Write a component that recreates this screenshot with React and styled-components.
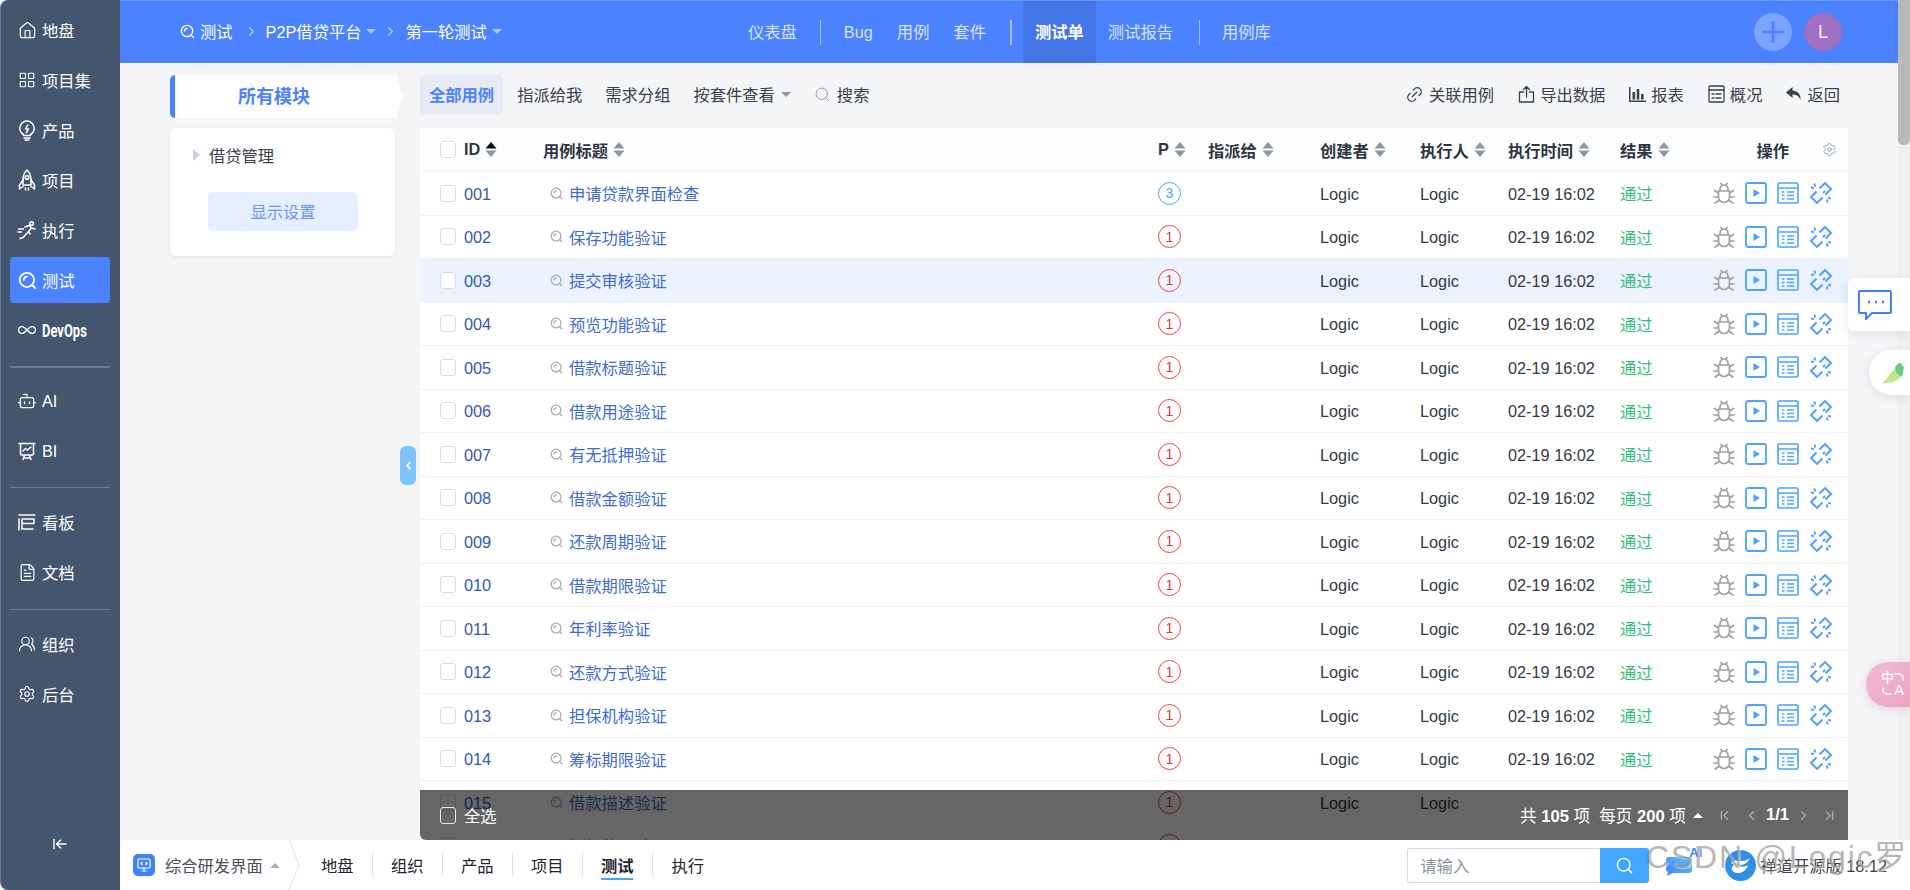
import React from 'react';
import styled, { createGlobalStyle } from 'styled-components';
import { House, LayoutGrid, Infinity as InfinityIcon, Bot, FileText, UsersRound, Settings, ArrowLeftToLine, Link2, Search, ChevronLeft, ChevronRight, ChevronFirst, ChevronLast } from 'lucide-react';

const Global = createGlobalStyle`
  html, body { margin: 0; padding: 0; height: 100%; overflow: hidden; background: #fff; }
  body { font-family: "Liberation Sans", "Noto Sans CJK SC", sans-serif; font-size: 16.3px; color: #333a47; }
  * { box-sizing: border-box; }
`;

const Shell = styled.div`position: relative; display: flex; width: 1910px; height: 890px; overflow: hidden; background: #fff;`;
const Side = styled.aside`
  flex: 0 0 120px; display: flex; flex-direction: column; padding: 7px 10px 0 9px; background: #44566e;
  border-left: 1px solid #6b7a8e; border-radius: 8px 0 0 8px; color: #fff;
`;
const SideGroup = styled.div`display: flex; flex-direction: column; gap: 4px;`;
const SideItem = styled.div`
  display: flex; align-items: center; gap: 5px; height: 46px; padding-left: 7px; border-radius: 3px;
  background: ${p => (p.$active ? '#4a82ff' : 'transparent')};
`;
const SideIcon = styled.span`display: flex; justify-content: center; width: 20px; flex: none;`;
const DevOpsLabel = styled.span`display: inline-block; font: 700 18px "Roboto", sans-serif; transform: scaleX(.72); transform-origin: left center;`;
const SideDivider = styled.div`height: ${p => p.$h || 1}px; background: #6d7c90; margin: ${p => p.$t}px 0 ${p => p.$b}px;`;
const Collapse = styled.div`margin-top: auto; height: 54px; display: flex; justify-content: center; align-items: flex-start;`;

const Main = styled.div`flex: 1; min-width: 0; display: flex; flex-direction: column;`;
const Upper = styled.div`flex: 1; min-height: 0; display: flex;`;
const PageCol = styled.div`flex: 1; min-width: 0; display: flex; flex-direction: column; background: #f4f5f7;`;
const ScrollTrack = styled.div`flex: 0 0 12px; background: #f0f0f1;`;
const ScrollThumb = styled.div`height: 145px; background: #b9b9b9; border-radius: 0 0 5px 5px;`;

const Header = styled.header`flex: 0 0 63px; display: flex; align-items: stretch; background: #4a82ff; border-top: 1px solid #6b98ff; padding: 0 56px 0 60px; color: #fff;`;
const Crumbs = styled.div`flex: 0 0 568px; display: flex; align-items: center; padding-bottom: 2px;`;
const Crumb = styled.span`display: flex; align-items: center; gap: 5px; white-space: nowrap;`;
const CrumbSep = styled.span`display: flex; margin: 0 7px 0 ${p => p.$l}px; color: rgba(255,255,255,.6);`;
const Caret = styled.span`
  display: inline-block; width: 0; height: 0; border-left: 5px solid transparent; border-right: 5px solid transparent;
  border-top: 5px solid ${p => p.$color || 'rgba(255,255,255,.55)'};
`;
const CaretUp = styled(Caret)`border-top: 0; border-bottom: 5px solid ${p => p.$color || '#fff'};`;
const Nav = styled.nav`display: flex; align-items: stretch; margin-left: -12px; flex: 1;`;
const NavLink = styled.a`
  display: flex; align-items: center; padding: 0 12px ${p => (p.$latin ? 0 : 2)}px; white-space: nowrap;
  color: ${p => (p.$active ? '#fff' : 'rgba(255,255,255,.8)')}; font-weight: ${p => (p.$active ? 700 : 400)};
  background: ${p => (p.$active ? '#4475e6' : 'transparent')};
`;
const NavSep = styled.span`align-self: center; width: ${p => p.$w || 1}px; height: 25px; background: rgba(255,255,255,.5); margin: 0 ${p => p.$r || 11}px 0 ${p => p.$l || 11}px;`;
const HeadRight = styled.div`display: flex; align-items: center; gap: 12px;`;
const AddBtn = styled.div`width: 38px; height: 38px; border-radius: 50%; background: #79a4ff; display: flex; align-items: center; justify-content: center; color: #4a82ff;`;
const Avatar = styled.div`width: 38px; height: 38px; border-radius: 50%; background: #a06fc2; display: flex; align-items: center; justify-content: center; color: #f3e9f8; font-size: 18px;`;

const Content = styled.div`flex: 1; min-height: 0; display: flex; gap: 25px; padding: 12px 50px 0;`;
const ModuleCol = styled.div`flex: 0 0 225px; min-width: 0; width: 225px; display: flex; flex-direction: column; gap: 10px; position: relative;`;
const ModuleHead = styled.div`
  flex: none; height: 43px; width: 233px; background: #fff; border-left: 5px solid #4a82ff; border-radius: 5px 0 0 5px;
  display: flex; align-items: center; justify-content: center; padding: 0 30px 3px 0; font-size: 18px; font-weight: 700; color: #4a82ff;
  clip-path: polygon(0 0, 97% 0, 100% 50%, 97% 100%, 0 100%);
`;
const ModuleCard = styled.div`height: 128px; background: #fff; border-radius: 6px; box-shadow: 0 1px 4px rgba(30,50,90,.08); padding: 15px 0 0 23px;`;
const ModuleRow = styled.div`display: flex; align-items: center; gap: 9px; height: 24px; color: #3a404c;`;
const TriRight = styled.span`width: 0; height: 0; border-top: 6px solid transparent; border-bottom: 6px solid transparent; border-left: 7px solid #c8cfdc;`;
const SettingBtn = styled.div`width: 150px; height: 39px; margin: 25px 0 0 15px; padding-bottom: 2px; background: #e6efff; border-radius: 6px; display: flex; align-items: center; justify-content: center; color: #6a94f5;`;
const Handle = styled.div`position: absolute; left: 230px; top: 371px; width: 16px; height: 39px; border-radius: 6px; background: #7cc4fb; color: #fff; display: flex; align-items: center; justify-content: center;`;

const TablePane = styled.div`flex: 0 0 1428px; min-width: 0; display: flex; flex-direction: column; position: relative; overflow: hidden;`;
const Toolbar = styled.div`flex: 0 0 40px; margin-bottom: 13px; display: flex; align-items: center; gap: 5px;`;
const ToolTab = styled.div`
  height: 40px; padding: 0 9px 2px; display: flex; align-items: center; gap: 6px; border-radius: 5px; white-space: nowrap; color: ${p => (p.$active ? '#4a82ff' : '#3a404c')};
  background: ${p => (p.$active ? '#e8ebf4' : 'transparent')}; font-weight: ${p => (p.$active ? 700 : 400)};
`;
const Tools = styled.div`margin-left: auto; display: flex; align-items: center; gap: 24px; padding: 0 8px 2px 0;`;
const Tool = styled.div`display: flex; align-items: center; gap: 5px; color: #3a404c; white-space: nowrap;`;

const columns = '24px 79px 615px 50px 112px 100px 88px 112px 90px 1fr';
const Table = styled.div`flex: 1; min-height: 0; background: #fff; overflow: hidden;`;
const HeadRow = styled.div`
  display: grid; grid-template-columns: ${columns}; align-items: center; height: 44px; padding-left: 20px; background: #fcfdfe;
  border-bottom: 1px solid #eff1f4; font-weight: 700; color: #2f3542;
`;
const Row = styled.div`
  display: grid; grid-template-columns: ${columns}; align-items: center; height: 43.5px; padding-left: 20px;
  border-bottom: 1px solid #f1f2f4; background: ${p => (p.$hover ? '#ecf2fe' : '#fff')};
`;
const Check = styled.span`display: block; width: 16px; height: 17px; border: 1px solid ${p => (p.$light ? '#e8e8e8' : '#d9dce1')}; border-radius: 3px; background: ${p => (p.$light ? 'transparent' : '#fff')};`;
const HeadCell = styled.div`display: flex; align-items: center; gap: 5px; white-space: nowrap;`;
const ActionHead = styled.div`display: flex; align-items: center; justify-content: flex-end; padding-right: 11px; gap: 33px; color: #2f3542;`;
const LatinCell = styled.span`padding-top: 2px;`;
const IdCell = styled.a`padding-top: 2px; color: #3358b5;`;
const TitleCell = styled.a`display: flex; align-items: center; gap: 6px; padding-left: 7px; color: #3f6bcf; white-space: nowrap;`;
const Badge = styled.span`
  display: flex; align-items: center; justify-content: center; width: 23px; height: 23px; border-radius: 50%; font-size: 14px;
  border: 1px solid ${p => (p.$blue ? '#4aa3ff' : '#f04040')}; color: ${p => (p.$blue ? '#4aa3ff' : '#d83a3a')};
`;
const Pass = styled.span`color: #35bd7f;`;
const Actions = styled.div`display: flex; align-items: center; gap: 10px; padding-left: 3px;`;

const Footer = styled.div`position: absolute; left: 0; right: 0; bottom: 0; height: 50px; background: rgba(0,0,0,.6); border-radius: 0 0 0 6px; display: flex; align-items: center; color: #fff;`;
const FootLeft = styled.div`display: flex; align-items: center; gap: 8px; padding-left: 20px;`;
const Pager = styled.div`margin-left: auto; height: 100%; width: 348px; background: #666; display: flex; align-items: center; justify-content: flex-end; padding-right: 11px; color: #fff; font-size: 16.6px;`;
const PagerText = styled.span`white-space: nowrap; margin-right: ${p => p.$mr || 0}px; color: #fff; strong { font-weight: 700; }`;
const PagerPage = styled.strong`margin: 0 7px 0 7px; white-space: nowrap;`;
const PagerIcon = styled.span`display: flex; color: #a8a8a8; margin-left: ${p => p.$ml || 0}px;`;

const Taskbar = styled.footer`flex: 0 0 50px; display: flex; align-items: center; padding-left: 13px; background: #fff; border-radius: 0 0 8px 0;`;
const AppLogo = styled.span`width: 22px; height: 22px; border-radius: 5px; background: #3f82ff; display: flex; align-items: center; justify-content: center; margin-right: 10px;`;
const AppName = styled.span`color: #4a505c; margin-right: 7px; white-space: nowrap;`;
const Chevron = styled.svg`display: block; margin-left: 8px; margin-right: 3px; flex: none;`;
const TaskTabs = styled.div`display: flex; align-items: center;`;
const TaskTab = styled.div`
  width: 70px; height: 24px; display: flex; align-items: center; justify-content: center; color: #1f2530; font-weight: ${p => (p.$active ? 700 : 400)};
  border-right: ${p => (p.$last ? 0 : '1px solid #dcdfe4')};
  span { position: relative; }
  span::after { content: ${p => (p.$active ? '""' : 'none')}; position: absolute; left: 0; right: 0; bottom: -3px; height: 2px; background: #42a5ff; }
`;
const TaskRight = styled.div`margin-left: auto; display: flex; align-items: center; padding-right: 23px;`;
const SearchBox = styled.div`display: flex; width: 242px; height: 35px; margin-right: 16px;`;
const SearchInput = styled.div`flex: 1; border: 1px solid #d6d9de; border-right: 0; border-radius: 3px 0 0 3px; color: #8a90a0; display: flex; align-items: center; padding-left: 12px;`;
const SearchBtn = styled.div`flex: 0 0 49px; background: #42a5ff; border-radius: 0 3px 3px 0; color: #fff; display: flex; align-items: center; justify-content: center;`;
const AiMark = styled.span`position: relative; display: flex; width: 60px;`;
const AiLabel = styled.span`position: absolute; left: 24px; top: -9px; font-size: 13px; font-weight: 700; color: #3f82ff;`;
const Edition = styled.span`display: flex; align-items: center; gap: 4px; color: #3a404c; white-space: nowrap;`;

const Watermark = styled.div`position: absolute; z-index: 5; left: 1646px; top: 839px; font-size: 32px; line-height: 37px; letter-spacing: 1.8px; color: rgba(135,135,135,.62); text-shadow: 1px 1px 0 rgba(255,255,255,.5); white-space: nowrap; pointer-events: none;`;
const FloatChat = styled.div`position: absolute; right: 0; top: 278px; width: 62px; height: 53px; background: #fff; border-radius: 6px 0 0 6px; box-shadow: 0 2px 12px rgba(40,60,100,.12); display: flex; align-items: center; padding-left: 9px;`;
const FloatBird = styled.div`position: absolute; right: 0; top: 350px; width: 41px; height: 45px; background: #fff; border-radius: 22px 0 0 22px; box-shadow: 0 2px 10px rgba(40,60,100,.12); display: flex; align-items: center; padding-left: 12px;`;
const FloatTrans = styled.div`position: absolute; right: 0; top: 662px; width: 44px; height: 45px; background: linear-gradient(135deg, #f5bdd4, #e8a3c1); border-radius: 22px 0 0 22px; box-shadow: 0 2px 10px rgba(200,100,150,.25); padding: 10px 0 0 15px;`;
const TransGrid = styled.div`display: grid; grid-template-columns: 12px 12px; grid-template-rows: 12px 12px; color: #fff; line-height: 12px; text-align: center;`;
const TransHan = styled.span`font-size: 13px; font-weight: 500;`;
const TransLatin = styled.span`font-size: 15px; font-weight: 400;`;

const base = { fill: 'none', stroke: 'currentColor', strokeWidth: 1.5, strokeLinecap: 'round', strokeLinejoin: 'round' };
const TestIcon = ({ size = 16, color }) => (
  <svg width={size} height={size} viewBox="0 0 16 16" {...base} style={{ color }}>
    <circle cx="7.5" cy="7.5" r="6" />
    <path d="M12 12l2.5 2.5M4.8 7.5a2.7 2.7 0 0 1 2.7-2.7" />
  </svg>
);
const BulbIcon = () => (
  <svg width="20" height="22" viewBox="0 0 20 22" {...base}>
    <path d="M6.5 15.5C4 14 2.8 11.8 2.8 9.3a7.2 7.2 0 0 1 14.4 0c0 2.5-1.2 4.7-3.7 6.2v1h-7z" />
    <path d="M7 19h6M8 21h4M10.8 6L8.5 10h3l-2.2 3.6" />
  </svg>
);
const RocketIcon = () => (
  <svg width="20" height="22" viewBox="0 0 20 22" {...base}>
    <path d="M10 1C7 4 6 7 6 11v5h8v-5c0-4-1-7-4-10z" />
    <circle cx="10" cy="8.5" r="1.8" />
    <path d="M6 11l-3.5 5v4L6 17.5M14 11l3.5 5v4L14 17.5M8.5 19v2M11.5 19v2" />
  </svg>
);
const RunIcon = () => (
  <svg width="20" height="20" viewBox="0 0 20 20" {...base}>
    <circle cx="14.5" cy="3.5" r="1.8" />
    <path d="M8 7l4-1.5 2.5 2.5-3 3.5 1.5 2.5M11.5 11.5L6 17.5 3 18.5M14.5 8l3.5 1M1.5 9h5M1 12h3.5" />
  </svg>
);
const BoardIcon = () => (
  <svg width="20" height="20" viewBox="0 0 20 20" {...base}>
    <path d="M2 3h16M5 7h12v4.5H5zM2 7v11M5 11.5V17h11" />
  </svg>
);
const ChartBoardIcon = () => (
  <svg width="20" height="20" viewBox="0 0 20 20" {...base}>
    <path d="M2 2.5h16M3.5 2.5V13a1 1 0 0 0 1 1h11a1 1 0 0 0 1-1V2.5M6 10l2.5-2.5 2 1.5L14 6M7.5 14.5l-1.5 4M12.5 14.5l1.5 4M6.5 17h7" />
  </svg>
);
const BugIcon = () => (
  <svg width="22" height="24" viewBox="0 0 22 24" {...base} stroke="#a0a0a0" strokeWidth="1.7">
    <path d="M5.5 10h11v6a5.5 5.5 0 0 1-11 0z M7 10V8a4 4 0 0 1 8 0v2 M8 2.5l1.5 2 M14 2.5l-1.5 2 M5.5 12L1.5 9.5 M16.5 12l4-2.5 M5.5 16H1 M16.5 16H21 M6 19.5l-4 2.5 M16 19.5l4 2.5" />
  </svg>
);
const PlayIcon = () => (
  <svg width="22" height="24" viewBox="0 0 22 24">
    <rect x="1" y="2" width="20" height="20" rx="2" fill="none" stroke="#4aa3ff" strokeWidth="1.8" />
    <path d="M8.5 8v8l6.5-4z" fill="#4aa3ff" />
  </svg>
);
const ListIcon = () => (
  <svg width="22" height="24" viewBox="0 0 22 24" {...base} stroke="#4aa3ff" strokeLinecap="butt" strokeWidth="1.6">
    <rect x="1" y="2" width="20" height="20" rx="1" />
    <path d="M1 7h20M5 11h2.5M10 11h7M5 14.5h2.5M10 14.5h7M5 18h2.5M10 18h7" />
  </svg>
);
const UnlinkIcon = () => (
  <svg width="24" height="24" viewBox="0 0 24 24" {...base} stroke="#4a9cff" strokeWidth="1.9" strokeLinecap="butt" strokeLinejoin="miter">
    <path d="M10.5 7.5L16 2l6 6-5.5 5.5M13.5 16.5L8 22l-6-6 5.5-5.5" />
    <path d="M5.5 2.5l.6 3M2 6.5l3 .6M16 10l-2 2M18.5 21.5l-.6-3M22 17.5l-3-.6" />
  </svg>
);
const SortIcon = ({ active }) => (
  <svg width="12" height="15" viewBox="0 0 12 15">
    <path d="M6 0l5.5 6.5H.5z" fill={active ? '#0c0c10' : '#8f95a3'} />
    <path d="M6 15L.5 8.5h11z" fill="#8f95a3" />
  </svg>
);
const ShareIcon = () => (
  <svg width="17" height="18" viewBox="0 0 17 18" {...base} strokeWidth="1.3">
    <path d="M5.5 7H1.5v10h14V7h-4M8.5 12V1.5M5.5 4.5l3-3 3 3" />
  </svg>
);
const BarsIcon = () => (
  <svg width="17" height="16" viewBox="0 0 17 16" fill="currentColor">
    <path d="M0 1h1.5v13.5H17V16H0zM3.5 6h2.6v7.5H3.5zM7.7 3h2.6v10.5H7.7zM12 8h2.6v5.5H12z" />
  </svg>
);
const SheetIcon = () => (
  <svg width="17" height="18" viewBox="0 0 17 18" {...base} strokeWidth="1.3">
    <rect x="1" y="1" width="15" height="16" rx="1" />
    <path d="M1 5h15M4 9h2M8 9h5M4 13h2M8 13h5" />
  </svg>
);
const BackIcon = () => (
  <svg width="16" height="14" viewBox="0 0 16 14" fill="currentColor">
    <path d="M6.5 0L0 5.5 6.5 11V7.5c4 0 6.5 1.5 8 5.5.5-5.5-2.5-9-8-9.5z" />
  </svg>
);
const MonitorIcon = () => (
  <svg width="14" height="14" viewBox="0 0 14 14" fill="none" stroke="#fff" strokeWidth="1.2">
    <rect x="1" y="1" width="12" height="9" rx="1" />
    <path d="M7 10v3M4.5 13h5M5.5 4L4 5.5 5.5 7M8.5 4L10 5.5 8.5 7" />
  </svg>
);
const ChatSmall = () => (
  <svg width="30" height="22" viewBox="0 0 30 22">
    <defs><linearGradient id="cg" x1="0" y1="1" x2="1" y2="0"><stop offset="0" stopColor="#3f82ff" /><stop offset="1" stopColor="#62c1f5" /></linearGradient></defs>
    <path d="M4 3h20a3 3 0 0 1 3 3v10a3 3 0 0 1-3 3H8l-6 3 1-4a3 3 0 0 1-2-3V6a3 3 0 0 1 3-3z" fill="url(#cg)" />
  </svg>
);
const ZenLogo = () => (
  <svg width="31" height="31" viewBox="0 0 31 31">
    <circle cx="15.5" cy="15.5" r="15.5" fill="#2f8fe8" />
    <path d="M6 13c5-6 9 2 19-5-3 7-9 8-13 6 3 4 8 3 11 1-2 8-12 11-16 5-1-2 0-4 2-5-2-2-3-2-3-2z" fill="#fff" />
  </svg>
);
const TransArc = ({ flip }) => (
  <svg width="12" height="12" viewBox="0 0 12 12" fill="none" stroke="#fff" strokeWidth="1.5" strokeLinecap="round" style={{ transform: flip ? 'rotate(180deg)' : 'none' }}>
    <path d="M2 2h4a4 4 0 0 1 4 4v2" />
  </svg>
);

const rows = [
  ['001', '申请贷款界面检查', 3], ['002', '保存功能验证', 1], ['003', '提交审核验证', 1], ['004', '预览功能验证', 1],
  ['005', '借款标题验证', 1], ['006', '借款用途验证', 1], ['007', '有无抵押验证', 1], ['008', '借款金额验证', 1],
  ['009', '还款周期验证', 1], ['010', '借款期限验证', 1], ['011', '年利率验证', 1], ['012', '还款方式验证', 1],
  ['013', '担保机构验证', 1], ['014', '筹标期限验证', 1], ['015', '借款描述验证', 1], ['016', '投标奖励验证', 1],
];

const sideA = [
  [<House size={19} strokeWidth={1.5} />, '地盘'], [<LayoutGrid size={18} strokeWidth={1.5} />, '项目集'], [<BulbIcon />, '产品'],
  [<RocketIcon />, '项目'], [<RunIcon />, '执行'], [<TestIcon size={19} />, '测试', true],
];
const heads = [['ID', true], ['用例标题'], ['P'], ['指派给'], ['创建者'], ['执行人'], ['执行时间'], ['结果']];

const SideEntry = ({ icon, label, active }) => (
  <SideItem $active={active}><SideIcon>{icon}</SideIcon><span>{label}</span></SideItem>
);

export default function App() {
  return (
    <Shell>
      <Global />
      <Side>
        <SideGroup>
          {sideA.map(([i, l, a]) => <SideEntry key={l} icon={i} label={l} active={a} />)}
          <SideEntry icon={<InfinityIcon size={20} strokeWidth={1.5} />} label={<DevOpsLabel>DevOps</DevOpsLabel>} />
        </SideGroup>
        <SideDivider $h={2} $t={13} $b={10} />
        <SideGroup>
          <SideEntry icon={<Bot size={20} strokeWidth={1.5} />} label="AI" />
          <SideEntry icon={<ChartBoardIcon />} label="BI" />
        </SideGroup>
        <SideDivider $t={13} $b={11} />
        <SideGroup>
          <SideEntry icon={<BoardIcon />} label="看板" />
          <SideEntry icon={<FileText size={19} strokeWidth={1.5} />} label="文档" />
        </SideGroup>
        <SideDivider $t={14} $b={11} />
        <SideGroup>
          <SideEntry icon={<UsersRound size={18} strokeWidth={1.5} />} label="组织" />
          <SideEntry icon={<Settings size={18} strokeWidth={1.5} />} label="后台" />
        </SideGroup>
        <Collapse><ArrowLeftToLine size={16} strokeWidth={2} /></Collapse>
      </Side>

      <Main>
        <Upper>
          <PageCol>
            <Header>
              <Crumbs>
                <Crumb><TestIcon size={15} />测试</Crumb>
                <CrumbSep $l={11}><ChevronRight size={15} strokeWidth={2} /></CrumbSep>
                <Crumb>P2P借贷平台<Caret /></Crumb>
                <CrumbSep $l={7}><ChevronRight size={15} strokeWidth={2} /></CrumbSep>
                <Crumb>第一轮测试<Caret /></Crumb>
              </Crumbs>
              <Nav>
                <NavLink>仪表盘</NavLink>
                <NavSep />
                <NavLink $latin>Bug</NavLink>
                <NavLink>用例</NavLink>
                <NavLink>套件</NavLink>
                <NavSep $w={2} $l={12} $r={11} />
                <NavLink $active>测试单</NavLink>
                <NavLink>测试报告</NavLink>
                <NavSep $l={14} $r={10} />
                <NavLink>用例库</NavLink>
              </Nav>
              <HeadRight>
                <AddBtn>
                  <svg width="24" height="24" viewBox="0 0 24 24" stroke="currentColor" strokeWidth="2.4"><path d="M12 1v22M1 12h22" /></svg>
                </AddBtn>
                <Avatar>L</Avatar>
              </HeadRight>
            </Header>

            <Content>
              <ModuleCol>
                <ModuleHead>所有模块</ModuleHead>
                <ModuleCard>
                  <ModuleRow><TriRight />借贷管理</ModuleRow>
                  <SettingBtn>显示设置</SettingBtn>
                </ModuleCard>
                <Handle><ChevronLeft size={13} strokeWidth={3} /></Handle>
              </ModuleCol>

              <TablePane>
                <Toolbar>
                  <ToolTab $active>全部用例</ToolTab>
                  <ToolTab>指派给我</ToolTab>
                  <ToolTab>需求分组</ToolTab>
                  <ToolTab>按套件查看<Caret $color="#8f95a3" /></ToolTab>
                  <ToolTab><Search size={17} strokeWidth={1.3} color="#8f95a3" />搜索</ToolTab>
                  <Tools>
                    <Tool><Link2 size={19} strokeWidth={1.6} style={{ transform: 'rotate(-45deg)' }} />关联用例</Tool>
                    <Tool><ShareIcon />导出数据</Tool>
                    <Tool><BarsIcon />报表</Tool>
                    <Tool><SheetIcon />概况</Tool>
                    <Tool><BackIcon />返回</Tool>
                  </Tools>
                </Toolbar>
                <Table>
                  <HeadRow>
                    <Check />
                    {heads.map(([l, a]) => <HeadCell key={l}>{l}<SortIcon active={a} /></HeadCell>)}
                    <ActionHead>操作<Settings size={15} strokeWidth={1.3} color="#8f95a3" /></ActionHead>
                  </HeadRow>
                  {rows.map(([id, title, p], i) => (
                    <Row key={id} $hover={i === 2}>
                      <Check />
                      <IdCell>{id}</IdCell>
                      <TitleCell><TestIcon size={13} color="#a5a9b2" />{title}</TitleCell>
                      <Badge $blue={p === 3}>{p}</Badge>
                      <span />
                      <LatinCell>Logic</LatinCell>
                      <LatinCell>Logic</LatinCell>
                      <LatinCell>02-19 16:02</LatinCell>
                      <Pass>通过</Pass>
                      <Actions><BugIcon /><PlayIcon /><ListIcon /><UnlinkIcon /></Actions>
                    </Row>
                  ))}
                </Table>
                <Footer>
                  <FootLeft><Check $light />全选</FootLeft>
                  <Pager>
                    <PagerText $mr={9}>共 <strong>105</strong> 项</PagerText>
                    <PagerText $mr={7}>每页 <strong>200</strong> 项</PagerText>
                    <CaretUp />
                    <PagerIcon $ml={14}><ChevronFirst size={15} strokeWidth={2.4} /></PagerIcon>
                    <PagerIcon $ml={12}><ChevronLeft size={15} strokeWidth={2.4} /></PagerIcon>
                    <PagerPage>1/1</PagerPage>
                    <PagerIcon><ChevronRight size={15} strokeWidth={2.4} /></PagerIcon>
                    <PagerIcon $ml={11}><ChevronLast size={15} strokeWidth={2.4} /></PagerIcon>
                  </Pager>
                </Footer>
              </TablePane>
            </Content>
          </PageCol>
          <ScrollTrack><ScrollThumb /></ScrollTrack>
        </Upper>

        <Taskbar>
          <AppLogo><MonitorIcon /></AppLogo>
          <AppName>综合研发界面</AppName>
          <CaretUp $color="#a8adb8" />
          <Chevron width="12" height="50" viewBox="0 0 12 50"><path d="M1 0l10 25L1 50" fill="none" stroke="#e3e5ea" /></Chevron>
          <TaskTabs>
            <TaskTab><span>地盘</span></TaskTab>
            <TaskTab><span>组织</span></TaskTab>
            <TaskTab><span>产品</span></TaskTab>
            <TaskTab><span>项目</span></TaskTab>
            <TaskTab $active><span>测试</span></TaskTab>
            <TaskTab $last><span>执行</span></TaskTab>
          </TaskTabs>
          <TaskRight>
            <SearchBox>
              <SearchInput>请输入</SearchInput>
              <SearchBtn><Search size={19} strokeWidth={1.8} /></SearchBtn>
            </SearchBox>
            <AiMark><ChatSmall /><AiLabel>AI</AiLabel></AiMark>
            <Edition><ZenLogo />禅道开源版 18.12</Edition>
          </TaskRight>
        </Taskbar>
      </Main>

      <FloatChat>
        <svg width="36" height="32" viewBox="0 0 36 32" fill="none" stroke="#3f82ff" strokeWidth="2" strokeLinejoin="round">
          <path d="M3 2h30a1 1 0 0 1 1 1v20a1 1 0 0 1-1 1H15l-6 6v-6H3a1 1 0 0 1-1-1V3a1 1 0 0 1 1-1z" />
          <path d="M11 13h2M18 13h2M25 13h2" strokeWidth="2.4" />
        </svg>
      </FloatChat>
      <FloatBird>
        <svg width="24" height="22" viewBox="0 0 24 22">
          <path d="M1 21C6 18 9 10 16 5l6 8c-5 6-13 9-21 8z" fill="#c4e68a" />
          <path d="M14 6c1-3 3-5 6-5l1 2 2 2-1 5-1 4c-4 1-6-4-7-8z" fill="#6ccb8c" />
        </svg>
      </FloatBird>
      <FloatTrans>
        <TransGrid>
          <TransHan>中</TransHan>
          <TransArc />
          <TransArc flip />
          <TransLatin>A</TransLatin>
        </TransGrid>
      </FloatTrans>
      <Watermark>CSDN @Logic罗</Watermark>
    </Shell>
  );
}
